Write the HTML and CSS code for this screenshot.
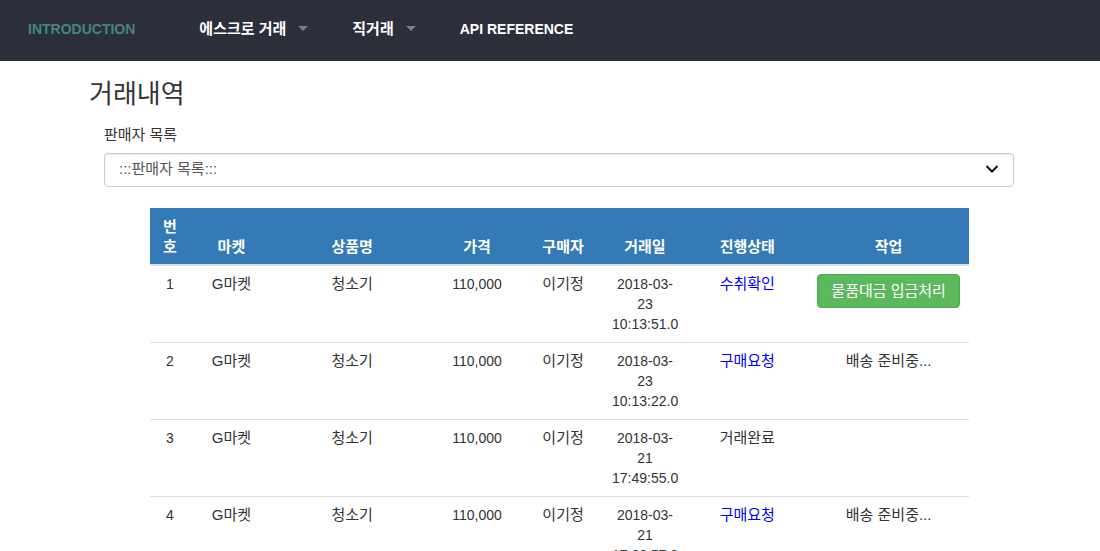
FILE: index.html
```html
<!DOCTYPE html>
<html lang="ko">
<head>
<meta charset="utf-8">
<title>거래내역</title>
<link rel="stylesheet" href="styles.css">
</head>
<body>
<nav class="navbar">
  <a class="nav-link nav-link-active" href="#">INTRODUCTION</a>
  <a class="nav-link nav-ko" href="#">에스크로 거래 <span class="caret"></span></a>
  <a class="nav-link nav-ko" href="#">직거래 <span class="caret"></span></a>
  <a class="nav-link" href="#">API REFERENCE</a>
</nav>
<main class="container">
  <h1 class="title">거래내역</h1>
  <div class="panel">
    <label class="field-label" for="seller">판매자 목록</label>
    <div class="select-wrap">
      <select class="form-control" id="seller">
        <option>:::판매자 목록:::</option>
      </select>
      <svg class="chevron" width="14" height="10" viewBox="0 0 14 10" aria-hidden="true"><path d="M1.500 2 7 7.500l5.500-5.500" fill="none" stroke="#111" stroke-width="2"/></svg>
    </div>
    <table class="table">
      <colgroup>
        <col class="col-no"><col class="col-market"><col class="col-item"><col class="col-price"><col class="col-buyer"><col class="col-date"><col class="col-status"><col class="col-action">
      </colgroup>
      <thead>
        <tr><th>번호</th><th>마켓</th><th>상품명</th><th>가격</th><th>구매자</th><th>거래일</th><th>진행상태</th><th>작업</th></tr>
      </thead>
      <tbody>
        <tr><td class="num">1</td><td>G마켓</td><td>청소기</td><td class="num">110,000</td><td>이기정</td><td class="num">2018-03-23 10:13:51.0</td><td><a class="status" href="#">수취확인</a></td><td class="action"><button class="btn" type="button">물품대금 입금처리</button></td></tr>
        <tr><td class="num">2</td><td>G마켓</td><td>청소기</td><td class="num">110,000</td><td>이기정</td><td class="num">2018-03-23 10:13:22.0</td><td><a class="status" href="#">구매요청</a></td><td>배송 준비중...</td></tr>
        <tr><td class="num">3</td><td>G마켓</td><td>청소기</td><td class="num">110,000</td><td>이기정</td><td class="num">2018-03-21 17:49:55.0</td><td>거래완료</td><td></td></tr>
        <tr><td class="num">4</td><td>G마켓</td><td>청소기</td><td class="num">110,000</td><td>이기정</td><td class="num">2018-03-21 17:08:57.0</td><td><a class="status" href="#">구매요청</a></td><td>배송 준비중...</td></tr>
      </tbody>
    </table>
  </div>
</main>
</body>
</html>
```
FILE: styles.css
```css
* {
  box-sizing: border-box;
}

html {
  scrollbar-width: none;
}

body {
  margin: 0;
  background: #fff;
  color: #333;
  font: 15px/20px "Liberation Sans", "Noto Sans CJK KR", sans-serif;
}

.navbar {
  display: flex;
  align-items: center;
  gap: 44px;
  min-height: 61px;
  padding: 0 28px 4px;
  background: #2c2f3a;
}

.nav-link {
  display: flex;
  align-items: center;
  gap: 12px;
  color: #fff;
  font-size: 14px;
  font-weight: bold;
  text-decoration: none;
  white-space: nowrap;
}

.nav-ko {
  font-size: 15px;
}

.nav-link-active {
  margin-right: 20px;
  color: #448581;
}

.caret {
  border: 5px solid transparent;
  border-top-color: #7b7e87;
  border-bottom: 0;
}

.container {
  padding: 0 86px 0 89px;
}

.title {
  margin: 18px 0 16px;
  font-size: 26px;
  font-weight: 400;
  line-height: 30px;
}

.panel {
  padding-left: 15px;
}

.field-label {
  display: block;
  margin-bottom: 8px;
}

.select-wrap {
  position: relative;
}

.form-control {
  appearance: none;
  display: block;
  width: 100%;
  height: 34px;
  padding: 4px 14px 6px;
  border: 1px solid #ccc;
  border-radius: 4px;
  background: #fff;
  box-shadow: inset 0 1px 1px rgba(0, 0, 0, 0.075);
  color: #555;
  font: inherit;
}

.chevron {
  position: absolute;
  top: 11px;
  right: 15px;
  pointer-events: none;
}

.table {
  width: 90%;
  margin: 21px auto 20px;
  border-collapse: collapse;
  table-layout: fixed;
  text-align: center;
}

.col-no { width: 5%; }
.col-market { width: 10%; }
.col-item { width: 19.5%; }
.col-price { width: 11%; }
.col-buyer { width: 10%; }
.col-date { width: 10%; }
.col-status { width: 15%; }
.col-action { width: 19.5%; }

th,
td {
  padding: 8px;
}

th {
  padding: 9px 12px 7px;
  border-bottom: 2px solid #ddd;
  background: #337ab7;
  color: #fff;
  vertical-align: bottom;
}

td {
  border-top: 1px solid #ddd;
  vertical-align: top;
}

.num {
  font-size: 14px;
}

.status {
  color: #00f;
  text-decoration: none;
}

.action {
  padding-right: 0;
  padding-left: 0;
}

.btn {
  padding: 6px 13px;
  border: 1px solid #4cae4c;
  border-radius: 4px;
  background: #5cb85c;
  color: #fff;
  font: inherit;
  white-space: nowrap;
}
```
